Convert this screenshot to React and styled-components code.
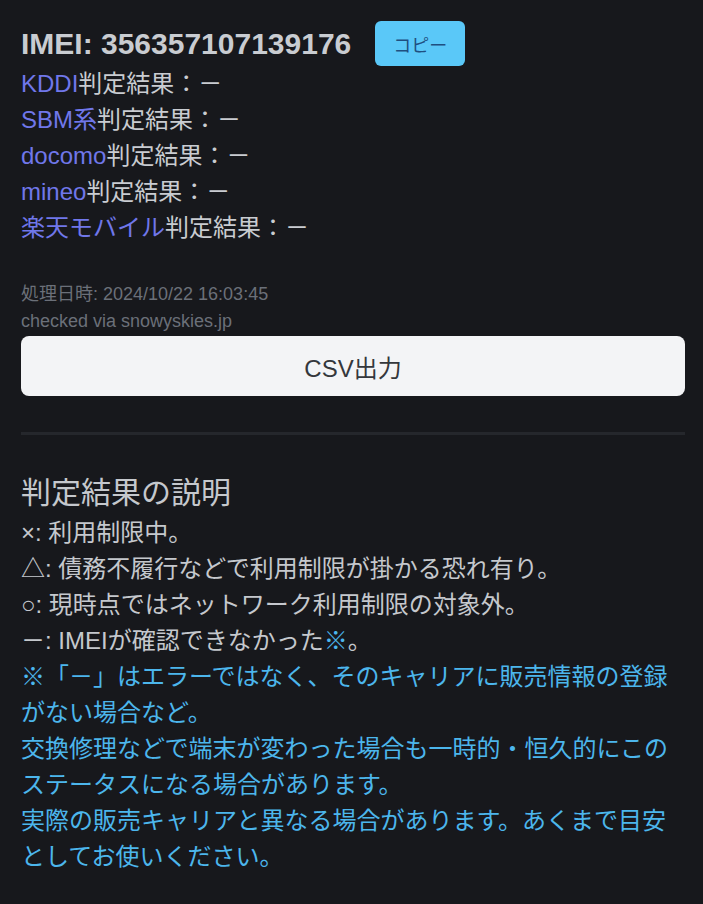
import React from 'react'
import styled, { createGlobalStyle } from 'styled-components'

const GlobalStyle = createGlobalStyle`
  html, body {
    margin: 0;
    padding: 0;
    background: #17181c;
  }
  body {
    font-family: 'Liberation Sans', 'Noto Sans CJK JP', sans-serif;
    color: #c9ccd1;
    text-spacing-trim: space-all;
  }
`

const carriers = ['KDDI', 'SBM系', 'docomo', 'mineo', '楽天モバイル']

const App = () => {
  return (
    <Wrapper>
      <GlobalStyle />
      <Header>
        <Imei>IMEI: 356357107139176</Imei>
        <CopyButton type='button'>コピー</CopyButton>
      </Header>
      <Results>
        {carriers.map((name) => (
          <li key={name}>
            <Carrier>{name}</Carrier>判定結果：－
          </li>
        ))}
      </Results>
      <Meta>
        <p>処理日時: 2024/10/22 16:03:45</p>
        <p>checked via snowyskies.jp</p>
      </Meta>
      <CsvButton type='button'>CSV出力</CsvButton>
      <Divider />
      <Legend>
        <h2>判定結果の説明</h2>
        <p>×: 利用制限中。</p>
        <p>△: 債務不履行などで利用制限が掛かる恐れ有り。</p>
        <p>○: 現時点ではネットワーク利用制限の対象外。</p>
        <p>
          －: IMEIが確認できなかった<Note as='span'>※</Note>。
        </p>
        <Note>※「－」はエラーではなく、そのキャリアに販売情報の登録がない場合など。</Note>
        <Note>交換修理などで端末が変わった場合も一時的・恒久的にこのステータスになる場合があります。</Note>
        <Note>実際の販売キャリアと異なる場合があります。あくまで目安としてお使いください。</Note>
      </Legend>
    </Wrapper>
  )
}

const Wrapper = styled.main`
  padding: 21px 18px 40px 21px;
  box-sizing: border-box;
  width: 703px;
`

const Header = styled.div`
  display: flex;
  align-items: center;
  gap: 24px;
`

const Imei = styled.h1`
  margin: 0;
  font-size: 30px;
  font-weight: 700;
  color: #c9ccd1;
  line-height: 1.2;
`

const CopyButton = styled.button`
  width: 90px;
  height: 45px;
  border: none;
  border-radius: 6px;
  background: #5ac8f8;
  color: #1f4f80;
  font-family: inherit;
  font-size: 18px;
`

const Results = styled.ul`
  list-style: none;
  margin: 0;
  padding: 0;
  font-size: 24px;
  line-height: 36px;
  color: #c9ccd1;
`

const Carrier = styled.span`
  color: #7077ea;
`

const Meta = styled.div`
  margin-top: 35px;
  font-size: 18px;
  line-height: 27px;
  color: #6b7079;
  p {
    margin: 0;
  }
`

const CsvButton = styled.button`
  display: block;
  width: 664px;
  height: 60px;
  margin-top: 1px;
  border: none;
  border-radius: 8px;
  background: #f3f4f6;
  color: #34373c;
  font-family: inherit;
  font-size: 24px;
`

const Divider = styled.hr`
  width: 664px;
  margin: 36px 0 35px;
  border: none;
  height: 3px;
  background: #25272c;
`

const Legend = styled.section`
  width: 664px;
  font-size: 24px;
  line-height: 36px;
  color: #c5c8cd;
  h2 {
    margin: 0;
    font-size: 30px;
    font-weight: 400;
    line-height: 45px;
    color: #c5c8cd;
  }
  p {
    margin: 0;
  }
`

const Note = styled.p`
  color: #4cb6ec;
`

export default App
